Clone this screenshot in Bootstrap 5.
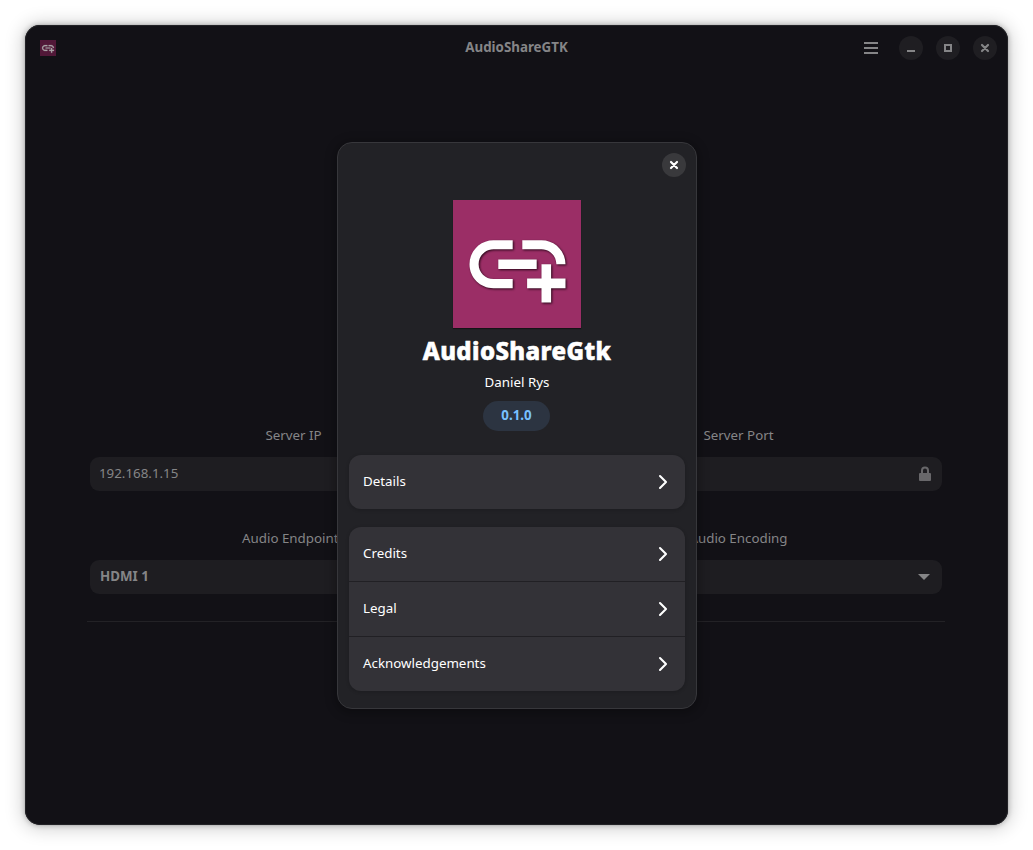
<!DOCTYPE html>
<html lang="en" data-bs-theme="dark">
<head>
<meta charset="utf-8">
<title>AudioShareGTK</title>
<link href="https://cdn.jsdelivr.net/npm/bootstrap@5.3.0/dist/css/bootstrap.min.css" rel="stylesheet">
<style>
html,body{height:850px;overflow:hidden}
body{background:#fff;font-family:"Noto Sans",sans-serif;font-size:13.33px;line-height:18px;color:#fff}
.app-window{width:983px;height:800px;margin:25px;background:#121116;border-radius:15px;box-shadow:inset 0 0 0 1px #222226,0 0 0 1px rgba(0,0,0,.03),0 0 5px 1px rgba(0,0,0,.2),0 1px 18px 3px rgba(0,0,0,.18);color:#858587}
.title-bar{height:46px;padding:0 11px 0 15px}
.title-text{font-weight:700;padding-bottom:2px}
.menu-icon{margin-right:21px}
.win-buttons{gap:13px}
.win-btn{width:24px;height:24px;border-radius:50%;background:#1f1e22}
.settings{margin:355px 66px 0 65px;column-gap:38px}
.field-label{height:18px;margin-bottom:13px}
.field-box{height:34px;border-radius:9px;background:#1e1d21;padding:0 9px}
.field-box span{padding-bottom:2px}
.field-box.drop{padding:0 10px}
.second-row{margin-top:38px}
.rule{height:1px;background:#232226;margin:27px 63px 0 62px}
.about{left:337px;top:142px;width:360px;height:567px;background:#222226;border:1px solid #37373b;border-radius:15px;box-shadow:0 2px 10px 3px rgba(0,0,0,.25);padding:0 11px}
.close-btn{right:10px;top:10px;width:24px;height:24px;border-radius:50%;background:#39393c}
.logo{margin-top:57px;width:128px;height:128px;box-shadow:0 1px 1px rgba(0,0,0,.4)}
.glyph{filter:drop-shadow(1px 1.5px 1px rgba(20,0,10,.85))}
.app-name{font-size:24px;font-weight:800;line-height:33px;margin-top:6px;letter-spacing:.4px;-webkit-text-stroke:.6px #fff}
.author{margin-top:6px}
.version{height:30px;width:67px;border-radius:15px;background:#2c3441;color:#78c0ff;font-weight:700;margin-top:10px;margin-right:1px;padding-bottom:2px}
.rows{width:336px;border-radius:12px;background:#333237;box-shadow:0 1px 3px 1px rgba(0,0,0,.12)}
.rows+.rows{margin-top:18px}
.row-item{height:55px;padding:0 17px 1px 14px;border-bottom:1px solid #212024}
.row-item span{padding-bottom:2px}
.row-item:last-child{height:54px;border:0}
svg{display:block}
</style>
<script src="https://cdn.jsdelivr.net/npm/bootstrap@5.3.0/dist/js/bootstrap.bundle.min.js"></script>
</head>
<body>
<svg width="0" height="0" class="position-absolute" aria-hidden="true">
<symbol id="link" viewBox="0 0 24 24"><path d="M8 11h8v2H8zM20.1 12H22c0-2.76-2.24-5-5-5h-4v1.9h4c1.71 0 3.1 1.39 3.1 3.1zM3.9 12c0-1.71 1.39-3.1 3.1-3.1h4V7H7c-2.76 0-5 2.24-5 5s2.24 5 5 5h4v-1.9H7c-1.71 0-3.1-1.39-3.1-3.1zM19 12h-2v3h-3v2h3v3h2v-3h3v-2h-3z"/></symbol>
<symbol id="chev" viewBox="0 0 10 16"><path d="M2 2l6 6-6 6" fill="none" stroke="#fff" stroke-width="2.1" stroke-linecap="round" stroke-linejoin="round"/></symbol>
<symbol id="cross" viewBox="0 0 10 10"><path d="M2 2l6 6M8 2L2 8" fill="none" stroke="currentColor" stroke-width="2.2" stroke-linecap="round"/></symbol>
</svg>
<main class="app-window d-flex flex-column">
  <header class="title-bar d-flex align-items-center position-relative">
    <svg width="16" height="16"><rect width="16" height="16" fill="#511838"/><use href="#link" x=".8" y=".8" width="14.4" height="14.4" fill="#a8a2a6" stroke="#a8a2a6" stroke-width=".3"/></svg>
    <div class="title-text position-absolute start-50 translate-middle-x">AudioShareGTK</div>
    <div class="ms-auto d-flex align-items-center">
      <svg width="14" height="12" class="menu-icon"><path d="M0 1h14M0 6h14M0 11h14" stroke="#858587" stroke-width="2"/></svg>
      <div class="win-buttons d-flex">
        <div class="win-btn d-flex align-items-center justify-content-center"><svg width="8" height="8"><path d="M0 7h8" stroke="#858587" stroke-width="2"/></svg></div>
        <div class="win-btn d-flex align-items-center justify-content-center"><svg width="8" height="8"><path d="M1 1h6v6H1z" fill="none" stroke="#858587" stroke-width="2"/></svg></div>
        <div class="win-btn d-flex align-items-center justify-content-center"><svg width="10" height="10"><use href="#cross"/></svg></div>
      </div>
    </div>
  </header>
  <section class="settings d-flex">
    <div class="flex-fill w-50">
      <div class="field-label text-center">Server IP</div>
      <div class="field-box d-flex align-items-center"><span>192.168.1.15</span></div>
      <div class="field-label text-center second-row">Audio Endpoints</div>
      <div class="field-box drop d-flex align-items-center fw-bold"><span>HDMI 1</span></div>
    </div>
    <div class="flex-fill w-50">
      <div class="field-label text-center">Server Port</div>
      <div class="field-box d-flex align-items-center justify-content-end"><svg width="16" height="16"><path d="M5 8V4.5a3 3 0 0 1 6 0V8" fill="none" stroke="#68676a" stroke-width="2"/><rect x="2" y="7" width="12" height="8" rx="1" fill="#68676a"/></svg></div>
      <div class="field-label text-center second-row">Audio Encoding</div>
      <div class="field-box drop d-flex align-items-center justify-content-end"><svg width="16" height="16"><path d="M2 5h12L8 11z" fill="#858587"/></svg></div>
    </div>
  </section>
  <div class="rule"></div>
</main>
<section class="about position-absolute d-flex flex-column align-items-center">
  <div class="close-btn position-absolute d-flex align-items-center justify-content-center text-white"><svg width="10" height="10"><use href="#cross"/></svg></div>
  <svg class="logo" width="128" height="128">
    <rect width="128" height="128" fill="#9b2e66"/>
    <use class="glyph" href="#link" x="6.9" y="6.6" width="115.2" height="115.2" fill="#fff"/>
  </svg>
  <div class="app-name">AudioShareGtk</div>
  <div class="author">Daniel Rys</div>
  <div class="version d-flex align-items-center justify-content-center">0.1.0</div>
  <div class="rows mt-4">
    <div class="row-item d-flex align-items-center justify-content-between"><span>Details</span><svg width="10" height="16"><use href="#chev"/></svg></div>
  </div>
  <div class="rows">
    <div class="row-item d-flex align-items-center justify-content-between"><span>Credits</span><svg width="10" height="16"><use href="#chev"/></svg></div>
    <div class="row-item d-flex align-items-center justify-content-between"><span>Legal</span><svg width="10" height="16"><use href="#chev"/></svg></div>
    <div class="row-item d-flex align-items-center justify-content-between"><span>Acknowledgements</span><svg width="10" height="16"><use href="#chev"/></svg></div>
  </div>
</section>
</body>
</html>
